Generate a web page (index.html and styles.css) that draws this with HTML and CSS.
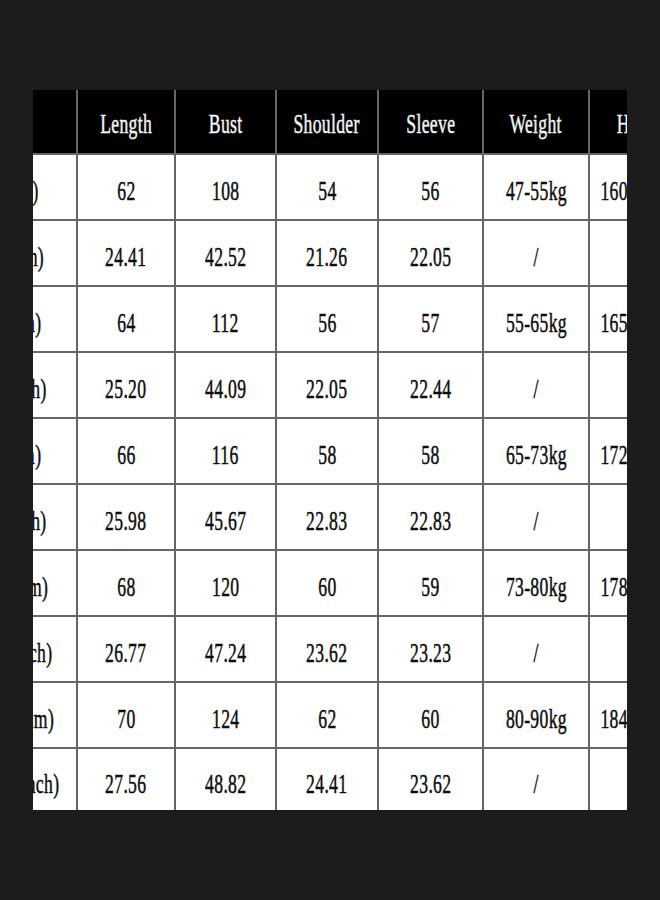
FILE: index.html
```html
<!DOCTYPE html>
<html lang="en">
<head>
<meta charset="utf-8">
<title>Size Chart</title>
<link rel="stylesheet" href="styles.css">
</head>
<body>
<div class="frame">
  <div class="chart">
    <div class="cell head"><span>Size</span></div>
    <div class="cell head"><span>Length</span></div>
    <div class="cell head"><span>Bust</span></div>
    <div class="cell head"><span>Shoulder</span></div>
    <div class="cell head"><span>Sleeve</span></div>
    <div class="cell head"><span>Weight</span></div>
    <div class="cell head"><span>Height</span></div>

    <div class="cell"><span>S(cm)</span></div>
    <div class="cell"><span>62</span></div>
    <div class="cell"><span>108</span></div>
    <div class="cell"><span>54</span></div>
    <div class="cell"><span>56</span></div>
    <div class="cell"><span>47-55kg</span></div>
    <div class="cell"><span>160-165cm</span></div>

    <div class="cell"><span>S(inch)</span></div>
    <div class="cell"><span>24.41</span></div>
    <div class="cell"><span>42.52</span></div>
    <div class="cell"><span>21.26</span></div>
    <div class="cell"><span>22.05</span></div>
    <div class="cell"><span>/</span></div>
    <div class="cell"><span>/</span></div>

    <div class="cell"><span>M(cm)</span></div>
    <div class="cell"><span>64</span></div>
    <div class="cell"><span>112</span></div>
    <div class="cell"><span>56</span></div>
    <div class="cell"><span>57</span></div>
    <div class="cell"><span>55-65kg</span></div>
    <div class="cell"><span>165-172cm</span></div>

    <div class="cell"><span>M(inch)</span></div>
    <div class="cell"><span>25.20</span></div>
    <div class="cell"><span>44.09</span></div>
    <div class="cell"><span>22.05</span></div>
    <div class="cell"><span>22.44</span></div>
    <div class="cell"><span>/</span></div>
    <div class="cell"><span>/</span></div>

    <div class="cell"><span>L (cm)</span></div>
    <div class="cell"><span>66</span></div>
    <div class="cell"><span>116</span></div>
    <div class="cell"><span>58</span></div>
    <div class="cell"><span>58</span></div>
    <div class="cell"><span>65-73kg</span></div>
    <div class="cell"><span>172-178cm</span></div>

    <div class="cell"><span>L (inch)</span></div>
    <div class="cell"><span>25.98</span></div>
    <div class="cell"><span>45.67</span></div>
    <div class="cell"><span>22.83</span></div>
    <div class="cell"><span>22.83</span></div>
    <div class="cell"><span>/</span></div>
    <div class="cell"><span>/</span></div>

    <div class="cell"><span>XL (cm)</span></div>
    <div class="cell"><span>68</span></div>
    <div class="cell"><span>120</span></div>
    <div class="cell"><span>60</span></div>
    <div class="cell"><span>59</span></div>
    <div class="cell"><span>73-80kg</span></div>
    <div class="cell"><span>178-184cm</span></div>

    <div class="cell"><span>XL (inch)</span></div>
    <div class="cell"><span>26.77</span></div>
    <div class="cell"><span>47.24</span></div>
    <div class="cell"><span>23.62</span></div>
    <div class="cell"><span>23.23</span></div>
    <div class="cell"><span>/</span></div>
    <div class="cell"><span>/</span></div>

    <div class="cell"><span>XXL (cm)</span></div>
    <div class="cell"><span>70</span></div>
    <div class="cell"><span>124</span></div>
    <div class="cell"><span>62</span></div>
    <div class="cell"><span>60</span></div>
    <div class="cell"><span>80-90kg</span></div>
    <div class="cell"><span>184-190cm</span></div>

    <div class="cell"><span>XXL (inch)</span></div>
    <div class="cell"><span>27.56</span></div>
    <div class="cell"><span>48.82</span></div>
    <div class="cell"><span>24.41</span></div>
    <div class="cell"><span>23.62</span></div>
    <div class="cell"><span>/</span></div>
    <div class="cell"><span>/</span></div>
  </div>
</div>
</body>
</html>
```

FILE: styles.css
```css
html, body {
  margin: 0;
  padding: 0;
  background: #1c1c1c;
}

body {
  font-family: "Liberation Serif", "Times New Roman", serif;
}

.frame {
  margin: 90px 0 0 33px;
  width: 594px;
  height: 720px;
  overflow: hidden;
}

.chart {
  display: grid;
  width: max-content;
  margin-left: -76px;
  grid-template-columns: 119px 96px 99px 100px 103px 104px 104px;
  grid-template-rows: 63px repeat(9, 64px) 61px;
  gap: 2px;
  background: #666666;
}

.cell {
  background: #ffffff;
  color: #0d0d0d;
  display: flex;
  align-items: center;
  justify-content: center;
  padding-top: 8px;
  box-sizing: border-box;
  font-size: 28px;
  line-height: 1;
}

.cell span {
  display: inline-block;
  white-space: pre;
  letter-spacing: 0.5px;
  transform: scaleX(0.63);
  transform-origin: center;
  -webkit-text-stroke: 0.5px currentColor;
}

.cell.head {
  background: #000000;
  color: #f4f4f4;
  padding-top: 5px;
}
```
